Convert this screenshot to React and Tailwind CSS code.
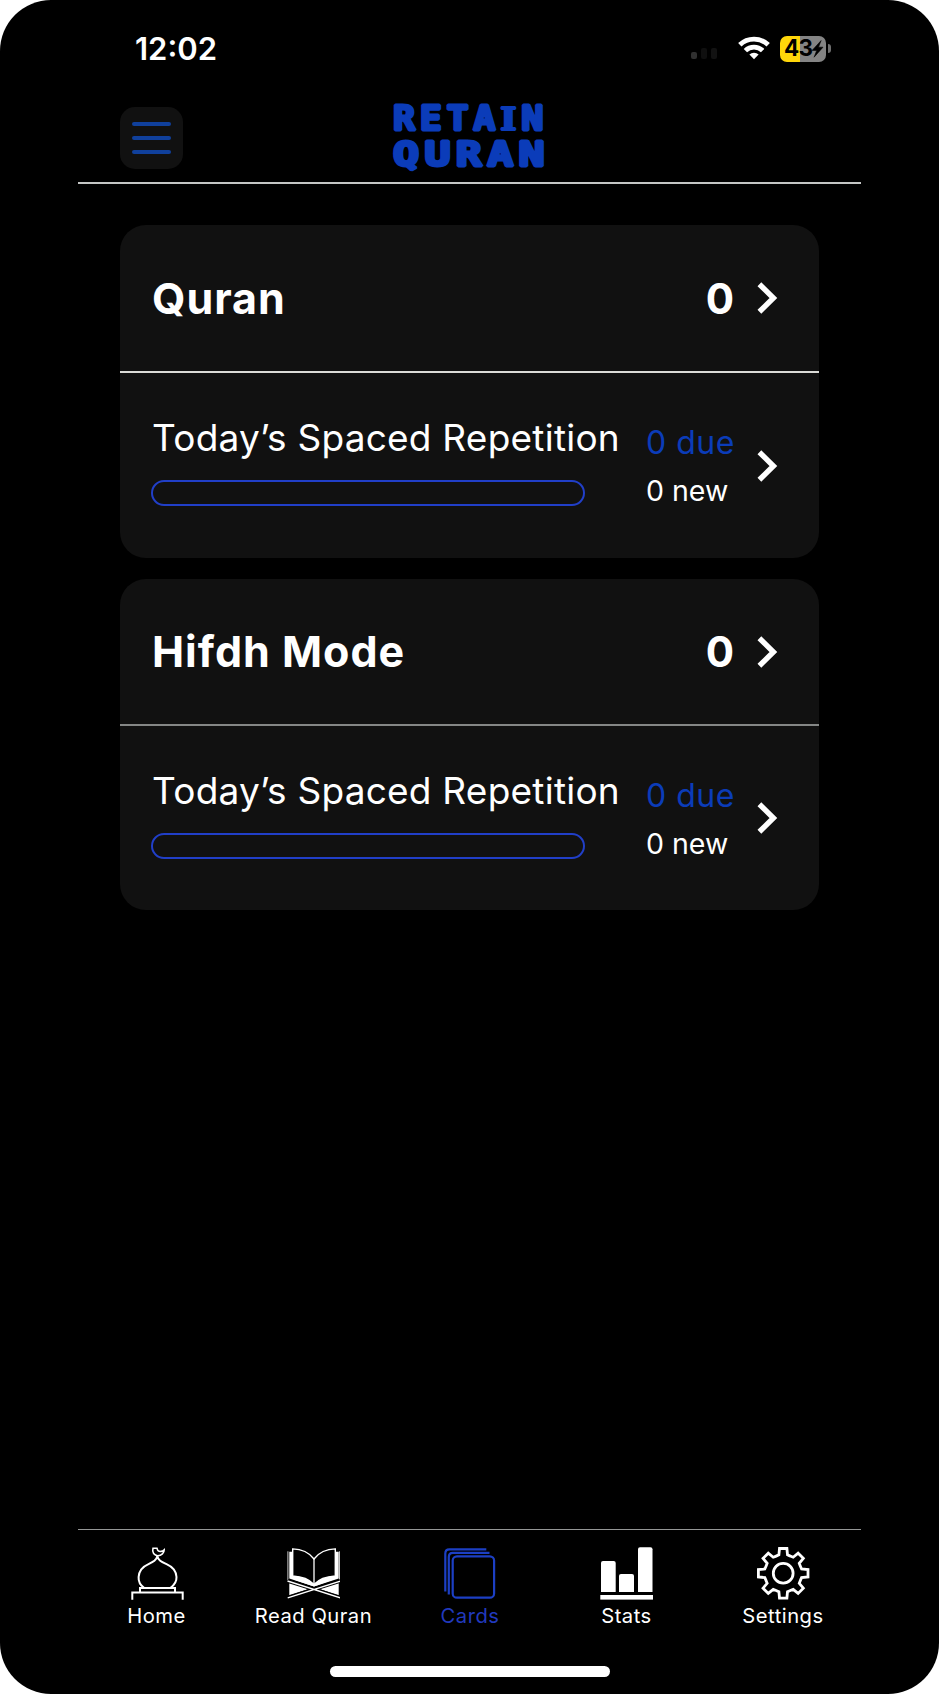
import React from 'react';

const decks = [
  { title: 'Quran', total: 0, due: 0, fresh: 0, line: 'bg-[#dcdcd8]', head: 'h-[146px]', body: 'h-[185px]' },
  { title: 'Hifdh Mode', total: 0, due: 0, fresh: 0, line: 'bg-[#858786]', head: 'h-[145px]', body: 'h-[184px]' },
];

const Logo = () => (
  <svg
    width="153"
    height="86"
    viewBox="0 0 153 86"
    fill="#0b3cb9"
    stroke="#0b3cb9"
    strokeWidth="2.8"
    strokeLinejoin="bevel"
    fontWeight="700"
    fontFamily="DejaVu Sans Mono, monospace"
    className="overflow-visible"
  >
    <text x="0" y="36.5" fontSize="33" letterSpacing="4" textLength="155" lengthAdjust="spacingAndGlyphs">
      RETA<tspan fontFamily="DejaVu Serif, serif" fontSize="32" strokeWidth="2">I</tspan>N
    </text>
    <text x="0" y="73" fontSize="33" letterSpacing="4" textLength="157" lengthAdjust="spacingAndGlyphs">QURAN</text>
  </svg>
);

const WifiIcon = () => (
  <svg width="32" height="24" viewBox="0 0 32 24" fill="none" stroke="#fff" strokeWidth="4.8">
    <path d="M1.8 8.8A20.4 20.4 0 0 1 30.2 8.8" />
    <path d="M7.4 14.6A12.3 12.3 0 0 1 24.6 14.6" />
    <path d="M11.4 18.6A6.6 6.6 0 0 1 20.6 18.6L16 23.2Z" fill="#fff" stroke="none" />
  </svg>
);

const Battery = () => (
  <div className="flex items-center">
    <div className="flex h-[26px] w-[46px] items-center rounded-[7px] bg-[linear-gradient(90deg,#ffd60a_0_43%,#848484_43%)] pl-[4px] text-black">
      <span className="text-[22.5px] leading-none font-bold tracking-[-0.8px]">43</span>
      <svg width="13" height="18" viewBox="0 0 12 18" className="-ml-px shrink-0" fill="#000" stroke="#000" strokeWidth="0.6">
        <path d="M9.6 0.6L0.6 10.4H5.2L2.6 17.2L11.5 7.2H7Z" />
      </svg>
    </div>
    <div className="ml-[2px] h-[9px] w-[3px] rounded-r-full bg-[#6f6f6f]" />
  </div>
);

const StatusBar = () => (
  <div className="flex h-[93px] items-center justify-between pt-[4px] pr-[108px] pl-[135px]">
    <span className="text-[31px] leading-none font-semibold">12:02</span>
    <div className="flex items-center">
      <div className="mr-[21px] flex items-end gap-[4px] pt-[9px]">
        <div className="h-[7px] w-[6px] rounded-[2px] bg-[#303030]" />
        <div className="h-[11px] w-[6px] rounded-[2px] bg-[#0f0f0f]" />
        <div className="h-[11px] w-[6px] rounded-[2px] bg-[#121212]" />
      </div>
      <div className="mr-[10px] pb-[2px]">
        <WifiIcon />
      </div>
      <Battery />
    </div>
  </div>
);

const Chevron = () => (
  <svg width="21" height="32" viewBox="0 0 21 32" fill="none" stroke="#fff" strokeWidth="5.4">
    <path d="M2.4 2.3L16.4 16L2.4 29.7" />
  </svg>
);

const DeckCard = ({ deck }) => (
  <section className="overflow-hidden rounded-[26px] bg-[#111111]">
    <div className={`flex items-center pr-[41px] pl-[32px] ${deck.head}`}>
      <h2 className="flex-1 text-[43px] leading-none font-bold tracking-[1px]">{deck.title}</h2>
      <span className="mr-[23px] text-[42px] leading-[43px] font-bold">{deck.total}</span>
      <Chevron />
    </div>
    <div className={`h-[2px] ${deck.line}`} />
    <div className={`flex pr-[41px] pl-[31px] ${deck.body}`}>
      <div className="w-[495px] pt-[44px]">
        <p className="pl-px text-[37px] leading-[41px] tracking-[0.23px] whitespace-nowrap">Today’s Spaced Repetition</p>
        <div className="mt-[22px] h-[26px] w-[434px] rounded-full border-2 border-[#213fc8]" />
      </div>
      <div className="flex-1 pt-[53px] whitespace-nowrap">
        <p className="text-[32px] leading-[34px] tracking-[0.5px] text-[#0b3cb9]">{deck.due} due</p>
        <p className="mt-[14px] text-[28.5px] leading-[34px]">{deck.fresh} new</p>
      </div>
      <div className="self-center">
        <Chevron />
      </div>
    </div>
  </section>
);

const HomeIcon = () => (
  <svg className="ml-px" width="53" height="53" viewBox="0 0 53 53" fill="none" stroke="#fff" strokeWidth="2">
    <path d="M1.3 52.8V45.5H51.7V52.8" />
    <path d="M9 45.5V41H44V45.5" />
    <path d="M13.3 41C9 38 7.3 34 7.6 30C8 23.5 12 19.5 17 17.3C22 15 25.6 13.5 26.3 8.8C27 13.5 31 15 36 17.3C41 19.5 45.2 23.5 45.5 30C45.7 34 43.5 38 39.3 41" />
    <path d="M22 1.2C20.8 5.5 23.3 8.7 26.8 8.7C30.5 8.7 33.2 6 33.2 2.8C31.3 4.6 28.5 4.8 27.3 3.9C26.3 3.2 26.3 2 26 1.2Z" strokeWidth="1.6" />
  </svg>
);

const BookIcon = () => (
  <svg width="53" height="53" viewBox="0 0 53 53" fill="none" stroke="#fff">
    <path d="M2.3 4.7H6.3V29C14 29.5 22 32 27 37.5C32 32 40 29.5 47.7 29V4.7H51.7V31.5L27 39.5L2.3 31.5Z" fill="#fff" stroke="none" />
    <path d="M0.9 4.3V33M52.5 4.3V33" strokeWidth="0.8" />
    <path d="M5.7 1.9C14 2 22 5.5 27 12C32 5.5 40 2 48.3 1.9V29C40 29.5 32 32 27 37.5C22 32 14 29.5 5.7 29Z" fill="#000" strokeWidth="1.4" />
    <path d="M6.3 29C14 29.5 22 32 27 37.5C32 32 40 29.5 47.7 29L45 33L27 39.5L8 33Z" fill="#fff" stroke="none" />
    <path d="M27 12V38" strokeWidth="1.3" />
    <path d="M2.3 35L23 41.5L2.3 48.5ZM51.7 35L31 41.5L51.7 48.5Z" fill="#fff" stroke="none" />
    <path d="M0.5 34L53.3 50.5M53.5 34L0.7 50.5" stroke="#000" strokeWidth="3.6" />
    <path d="M0.5 34L53.3 50.8M53.5 34L0.7 50.8" strokeWidth="1.4" />
  </svg>
);

const CardsIcon = () => (
  <svg className="ml-px" width="53" height="53" viewBox="0 0 53 53" fill="none" stroke="#1c3fc4" strokeWidth="2.2">
    <path d="M1.3 44.5V6.5Q1.3 2.4 5.4 2.4H42.3" />
    <path d="M4.8 47.5V10Q4.8 5.9 8.9 5.9H45.5" />
    <rect x="8.7" y="9.3" width="41.4" height="41.4" rx="4.3" />
  </svg>
);

const StatsIcon = () => (
  <svg width="53" height="53" viewBox="0 0 53 53" fill="#fff">
    <path d="M1 45V16Q1 14 3 14H13.7Q15.7 14 15.7 16V45Z" />
    <path d="M19 45V29Q19 27 21 27H32Q34 27 34 29V45Z" />
    <path d="M38 45V2.2Q38 0.2 40 0.2H50.5Q52.5 0.2 52.5 2.2V45Z" />
    <rect x="0.3" y="48" width="52.7" height="4.6" />
  </svg>
);

const gearPoints = [0, 45, 90, 135, 180, 225, 270, 315]
  .flatMap((deg) => {
    const a = (deg * Math.PI) / 180;
    return [[-6.6, -17.4], [-4.3, -18.4], [-3.7, -24.8], [3.7, -24.8], [4.3, -18.4], [6.6, -17.4]].map(
      ([x, y]) =>
        `${(26.2 + x * Math.cos(a) - y * Math.sin(a)).toFixed(2)},${(26.3 + x * Math.sin(a) + y * Math.cos(a)).toFixed(2)}`
    );
  })
  .join(' ');

const SettingsIcon = () => (
  <svg width="53" height="53" viewBox="0 0 53 53" fill="none" stroke="#fff" strokeWidth="2.8">
    <polygon points={gearPoints} />
    <circle cx="26.2" cy="26.3" r="9.9" />
  </svg>
);

const tabs = [
  { label: 'Home', Icon: HomeIcon },
  { label: 'Read Quran', Icon: BookIcon },
  { label: 'Cards', Icon: CardsIcon, active: true },
  { label: 'Stats', Icon: StatsIcon },
  { label: 'Settings', Icon: SettingsIcon },
];

const App = () => {
  return (
    <div className="min-h-screen bg-white">
      <div className="flex h-[1694px] w-[939px] flex-col overflow-hidden rounded-[51px] bg-black font-['Inter',sans-serif] text-white">
        <StatusBar />

        <header className="mx-[78px] grid h-[91px] grid-cols-[1fr_auto_1fr] items-start border-b-2 border-[#c4c6c5] px-[42px]">
          <button className="mt-[14px] flex h-[62px] w-[63px] flex-col items-center gap-[10px] rounded-[15px] bg-[#111111] pt-[15px]">
            <span className="h-[4px] w-[39px] rounded-full bg-[#10409c]" />
            <span className="h-[4px] w-[39px] rounded-full bg-[#10409c]" />
            <span className="h-[4px] w-[39px] rounded-full bg-[#10409c]" />
          </button>
          <Logo />
        </header>

        <main className="flex flex-1 flex-col gap-[21px] px-[120px] pt-[41px]">
          {decks.map((deck) => (
            <DeckCard key={deck.title} deck={deck} />
          ))}
        </main>

        <nav className="mx-[78px] grid h-[137px] grid-cols-[157px_157px_156px_157px_156px] border-t border-[#959796] pt-[17px]">
          {tabs.map(({ label, Icon, active }) => (
            <div key={label} className={`flex flex-col items-center ${active ? 'text-[#2139bd]' : 'text-white'}`}>
              <Icon />
              <span className="mt-[4px] text-[20.2px] leading-[24px] tracking-[0.5px]">{label}</span>
            </div>
          ))}
        </nav>
        <div className="mx-auto mb-[17px] h-[11px] w-[280px] rounded-full bg-white" />
      </div>
    </div>
  );
};

export default App;
